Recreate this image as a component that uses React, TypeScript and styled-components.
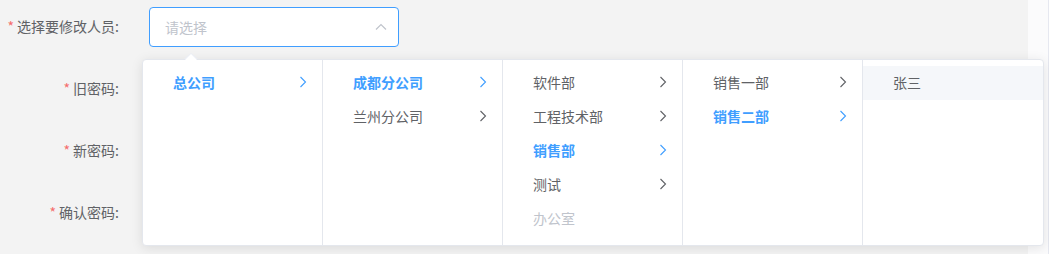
import styled, { createGlobalStyle } from "styled-components";

const GlobalStyle = createGlobalStyle`
  html, body {
    margin: 0;
    padding: 0;
    background: #f3f3f3;
    font-family: "Noto Sans CJK SC", "Noto Sans", "Liberation Sans", sans-serif;
    font-size: 14px;
    color: #606266;
  }
`;

const Page = styled.div`
  display: flex;
  height: 254px;
  overflow: hidden;
`;

const Main = styled.div`
  position: relative;
  width: 1028px;
  background: #f3f3f3;
  padding-top: 7px;
  box-sizing: border-box;
`;

const SideStrip = styled.div`
  flex: 1;
  background: #fbfbfc;
  border-right: 1px solid #e6e8f0;
`;

const FormRow = styled.div`
  display: flex;
  align-items: center;
  height: 40px;
  margin-bottom: 22px;
`;

const Label = styled.label`
  width: 119px;
  text-align: right;
  line-height: 38px;
  padding-bottom: 2px;
  color: #606266;
  white-space: nowrap;
`;

const Star = styled.span`
  color: #f56c6c;
  margin-right: 3px;
`;

const SelectBox = styled.div`
  margin-left: 30px;
  width: 250px;
  height: 40px;
  box-sizing: border-box;
  border: 1px solid #409eff;
  border-radius: 4px;
  background: #fff;
  display: flex;
  align-items: center;
  justify-content: space-between;
  padding: 0 11px 0 15px;
`;

const Placeholder = styled.span`
  color: #c0c4cc;
`;

const Popper = styled.div`
  position: absolute;
  left: 142px;
  top: 59px;
  display: flex;
  background: #fff;
  border: 1px solid #e4e7ed;
  border-radius: 4px;
  box-shadow: 0 2px 12px 0 rgba(0, 0, 0, 0.1);

  &::before,
  &::after {
    content: "";
    position: absolute;
    left: 42px;
    border: 6px solid transparent;
    border-top-width: 0;
  }
  &::before {
    top: -7px;
    border-bottom: 6px solid #ebeef5;
    border-left-width: 7px;
    border-right-width: 7px;
    left: 41px;
  }
  &::after {
    top: -6px;
    border-bottom: 6px solid #fff;
  }
`;

const Column = styled.ul`
  list-style: none;
  margin: 0;
  padding: 6px 0;
  width: 180px;
  height: 185px;
  box-sizing: border-box;
  border-right: 1px solid #e4e7ed;

  &:last-child {
    border-right: none;
  }
`;

const Node = styled.li<{ $state?: "active" | "disabled" | "hover" }>`
  height: 34px;
  box-sizing: border-box;
  line-height: 32px;
  padding: 0 15px 2px 30px;
  display: flex;
  align-items: center;
  justify-content: space-between;
  color: ${(p) =>
    p.$state === "active" ? "#409eff" : p.$state === "disabled" ? "#c0c4cc" : "#606266"};
  font-weight: ${(p) => (p.$state === "active" ? 700 : 400)};
  background: ${(p) => (p.$state === "hover" ? "#f5f7fa" : "transparent")};
`;

const ChevronRight = ({ color }: { color: string }) => (
  <svg width="8" height="12" viewBox="0 0 8 12">
    <path d="M1.5 1 L6.5 6 L1.5 11" fill="none" stroke={color} strokeWidth="1.1" />
  </svg>
);

const ChevronUp = () => (
  <svg width="12" height="8" viewBox="0 0 12 8">
    <path d="M1 6.5 L6 1.5 L11 6.5" fill="none" stroke="#c0c4cc" strokeWidth="1.2" />
  </svg>
);

type Item = { label: string; state?: "active" | "disabled" | "hover"; leaf?: boolean };

const columns: Item[][] = [
  [{ label: "总公司", state: "active" }],
  [{ label: "成都分公司", state: "active" }, { label: "兰州分公司" }],
  [
    { label: "软件部" },
    { label: "工程技术部" },
    { label: "销售部", state: "active" },
    { label: "测试" },
    { label: "办公室", state: "disabled", leaf: true },
  ],
  [{ label: "销售一部" }, { label: "销售二部", state: "active" }],
  [{ label: "张三", state: "hover", leaf: true }],
];

const fields = ["旧密码", "新密码", "确认密码"];

export default function App() {
  return (
    <Page>
      <GlobalStyle />
      <Main>
        <FormRow>
          <Label>
            <Star>*</Star>选择要修改人员:
          </Label>
          <SelectBox>
            <Placeholder>请选择</Placeholder>
            <ChevronUp />
          </SelectBox>
        </FormRow>
        {fields.map((f) => (
          <FormRow key={f}>
            <Label>
              <Star>*</Star>
              {f}:
            </Label>
          </FormRow>
        ))}
        <Popper>
          {columns.map((col, i) => (
            <Column key={i}>
              {col.map((item) => (
                <Node key={item.label} $state={item.state}>
                  <span>{item.label}</span>
                  {!item.leaf && (
                    <ChevronRight color={item.state === "active" ? "#409eff" : "#606266"} />
                  )}
                </Node>
              ))}
            </Column>
          ))}
        </Popper>
      </Main>
      <SideStrip />
    </Page>
  );
}
